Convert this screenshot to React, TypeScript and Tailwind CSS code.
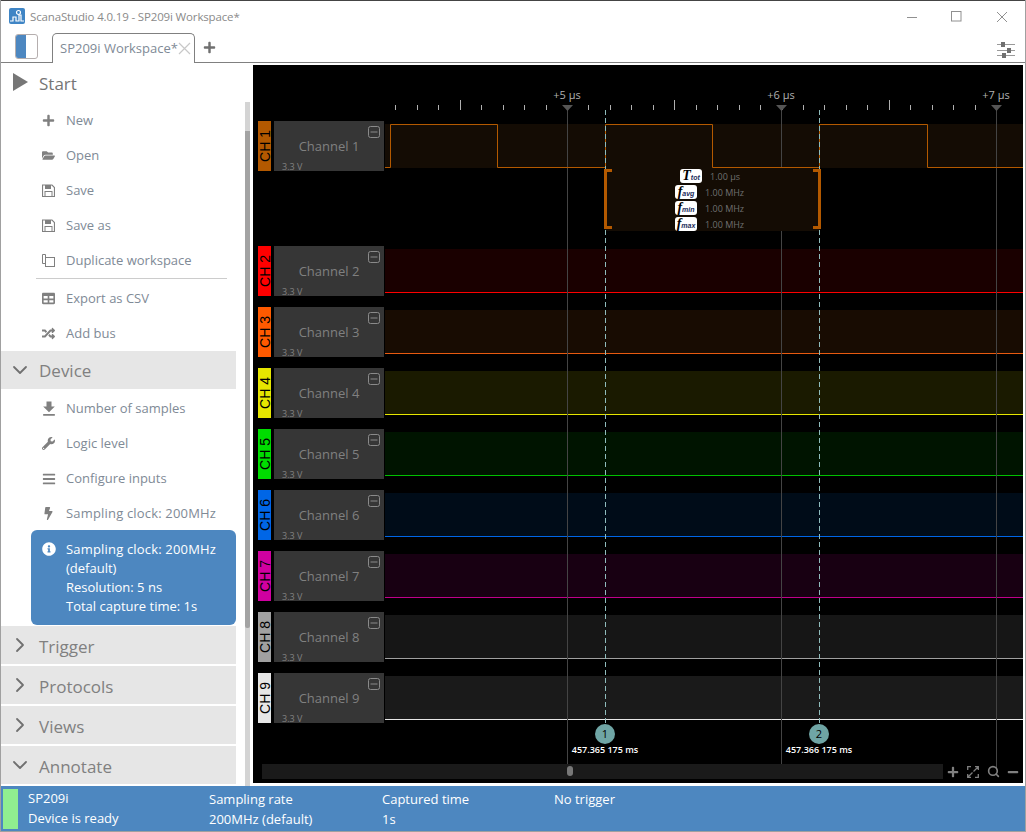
import React from "react";
import { ChevronDown, ChevronRight, Search } from "lucide-react";
import { FaPlus, FaFolderOpen, FaTable, FaRandom, FaWrench, FaBars, FaBolt, FaInfoCircle, FaMinus } from "react-icons/fa";
import { MdFileDownload } from "react-icons/md";

const FONT = "font-['Open_Sans','Noto_Sans',sans-serif]";

function SaveIcon() {
  return (
    <svg width="13" height="13" viewBox="0 0 13 13" fill="none">
      <path d="M1 1H10L12.5 3.5V12.5H0.5V1Z" stroke="#808080" strokeWidth="1.2" />
      <rect x="3" y="1" width="6" height="4" fill="#808080" />
      <rect x="3" y="7.5" width="7" height="5" stroke="#808080" />
    </svg>
  );
}

function CopyIcon() {
  return (
    <svg width="13" height="13" viewBox="0 0 13 13" fill="none">
      <path d="M3.5 3.5V0.5H0.5V9.5H3.5" stroke="#808080" />
      <rect x="3.5" y="3.5" width="9" height="9" stroke="#808080" />
    </svg>
  );
}

function Item({ icon, label, wide }: { icon: React.ReactNode; label: string; wide?: boolean }) {
  return (
    <div className="flex h-[35px] items-center">
      <div className="ml-[41px] flex w-[24px] items-center text-[#808080]">{icon}</div>
      <span className={`text-[13px] text-[#808a96] ${wide ? "tracking-[0.18px]" : ""}`}>{label}</span>
    </div>
  );
}

function Section({ label, open, mb, high }: { label: string; open?: boolean; mb?: boolean; high?: boolean }) {
  return (
    <div className={`flex h-[38px] w-[235px] shrink-0 items-center bg-[#e6e6e6] ${mb ? "mb-[2px]" : ""}`}>
      <div className="flex w-[38px] justify-center text-[#707070]">
        {open ? <ChevronDown size={24} strokeWidth={1.8} /> : <ChevronRight size={24} strokeWidth={1.8} />}
      </div>
      <span className={`text-[17px] leading-[24px] text-[#808080] ${high ? "pt-[2px]" : "pt-[4px]"}`}>{label}</span>
    </div>
  );
}

function Sidebar() {
  return (
    <div className="relative h-[723px] w-[251px] shrink-0 overflow-hidden">
      <div className="flex h-[40px] items-center">
        <svg width="15" height="18" viewBox="0 0 15 18" className="-mt-[2px] ml-[12px] mr-[11px]">
          <polygon points="0,0 15,9 0,18" fill="#777777" />
        </svg>
        <span className="pt-px text-[17px] text-[#757575]">Start</span>
      </div>
      <div className="w-[235px]">
        <Item icon={<FaPlus size={13} />} label="New" />
        <Item icon={<FaFolderOpen size={13} />} label="Open" />
        <Item icon={<SaveIcon />} label="Save" />
        <Item icon={<SaveIcon />} label="Save as" />
        <Item icon={<CopyIcon />} label="Duplicate workspace" />
        <div className="mb-[2px] ml-[35px] h-px w-[191px] bg-[#cccccc]" />
        <Item icon={<FaTable size={13} />} label="Export as CSV" />
        <Item icon={<FaRandom size={13} />} label="Add bus" />
        <Section label="Device" open mb high />
        <Item icon={<MdFileDownload size={20} className="-ml-[3px]" />} label="Number of samples" />
        <Item icon={<FaWrench size={13} />} label="Logic level" />
        <Item icon={<FaBars size={14} />} label="Configure inputs" />
        <Item icon={<FaBolt size={13} />} label="Sampling clock: 200MHz" wide />
        <div className="-mt-[1px] mb-px ml-[30px] flex h-[95px] w-[205px] rounded-[6px] bg-[#4d87c0] pt-[10px] text-[13px] leading-[19px] text-white">
          <div className="ml-[11px] w-[24px] pt-[2px]">
            <FaInfoCircle size={14} />
          </div>
          <div>
            <div className="tracking-[0.18px]">Sampling clock: 200MHz</div>
            <div>(default)</div>
            <div>Resolution: 5 ns</div>
            <div>Total capture time: 1s</div>
          </div>
        </div>
        <Section label="Trigger" mb />
        <Section label="Protocols" mb />
        <Section label="Views" mb />
        <Section label="Annotate" open />
      </div>
      <div className="absolute left-[244px] top-[39px] h-[684px] w-[5px] bg-[#d4d4d4]">
        <div className="mt-[29px] h-[497px] w-[5px] rounded-b-[2px] bg-[#a3a3a3]" />
      </div>
    </div>
  );
}

function Pill({ sym, sub, value, wide }: { sym: string; sub: string; value: string; wide?: boolean }) {
  return (
    <div className={`flex h-[16px] items-center ${wide ? "pl-[75px]" : "pl-[70px]"}`}>
      <div className="flex h-[14px] w-[22px] items-end justify-center rounded-[3px] bg-white text-black">
        <span className="font-['Liberation_Serif',serif] text-[14px] font-bold italic leading-[14px]">{sym}</span>
        <span className="font-['Liberation_Sans',sans-serif] text-[7px] font-bold italic leading-[10px] text-[#1a2a5a]">{sub}</span>
      </div>
      <span className="ml-[8px] mt-[2px] text-[9px] text-[#707070]">{value}</span>
    </div>
  );
}

const CHANNELS = [
  { n: 2, tag: "bg-[#ff0000]", band: "bg-[#1a0000]", line: "bg-[#ff0000]" },
  { n: 3, tag: "bg-[#ff5a00]", band: "bg-[#180c02]", line: "bg-[#e85a10]" },
  { n: 4, tag: "bg-[#e6e600]", band: "bg-[#1a1a00]", line: "bg-[#e6e600]" },
  { n: 5, tag: "bg-[#00dd00]", band: "bg-[#001400]", line: "bg-[#00c000]" },
  { n: 6, tag: "bg-[#0066e6]", band: "bg-[#000c18]", line: "bg-[#0066e6]" },
  { n: 7, tag: "bg-[#d000a0]", band: "bg-[#180012]", line: "bg-[#c0008a]" },
  { n: 8, tag: "bg-[#a0a0a0]", band: "bg-[#161616]", line: "bg-[#a0a0a0]" },
  { n: 9, tag: "bg-[#e6e6e6]", band: "bg-[#1a1a1a]", line: "bg-[#e6e6e6]" },
];

function ChannelHead({ n, tag }: { n: number; tag: string }) {
  return (
    <>
      <div className={`ml-[5px] flex h-[50px] w-[13px] shrink-0 items-center justify-center ${tag}`}>
        <span className="rotate-180 font-['Liberation_Sans',sans-serif] text-[14px] leading-none text-black [writing-mode:vertical-rl]">CH {n}</span>
      </div>
      <div className="relative ml-[3px] h-[50px] w-[110px] shrink-0 bg-[#363636]">
        <div className="pt-[15px] text-center text-[13px] leading-[20px] text-[#808080]">Channel {n}</div>
        <div className="absolute left-[8px] top-[41px] text-[9px] leading-[9px] text-[#808080]">3.3 V</div>
        <svg width="12" height="12" viewBox="0 0 12 12" className="absolute right-[4px] top-[5px]">
          <rect x="0.5" y="0.5" width="11" height="11" rx="2" fill="none" stroke="#8a8a8a" />
          <line x1="2.5" y1="6" x2="9.5" y2="6" stroke="#8a8a8a" />
        </svg>
      </div>
    </>
  );
}

function Canvas() {
  const ticks: number[] = [];
  for (let i = -8; i <= 20; i++) ticks.push(i);
  const toX = (k: number) => Math.round(314 + k * 21.45);
  return (
    <div className="relative ml-px mt-[2px] h-[718px] w-[770px] overflow-hidden bg-black">
      <div className="relative h-[56px]">
        <div className="absolute left-[274px] top-[23px] w-[80px] text-center text-[11px] leading-[14px] text-[#b0b0b0]">+5 µs</div>
        <div className="absolute left-[488px] top-[23px] w-[80px] text-center text-[11px] leading-[14px] text-[#b0b0b0]">+6 µs</div>
        <div className="absolute left-[703px] top-[23px] w-[80px] text-center text-[11px] leading-[14px] text-[#b0b0b0]">+7 µs</div>
      </div>
      <div className="flex h-[125px] items-start">
        <ChannelHead n={1} tag="bg-[#b35900]" />
        <div className="relative ml-px mt-[3px] h-[44px] flex-1 bg-[#140c04]" />
      </div>
      {CHANNELS.map((c) => (
        <div key={c.n} className="mb-[11px] flex h-[50px] items-start">
          <ChannelHead n={c.n} tag={c.tag} />
          <div className="ml-px mt-[3px] flex h-[44px] flex-1 flex-col justify-end">
            <div className={`flex-1 ${c.band}`} />
            <div className={`h-px ${c.line}`} />
          </div>
        </div>
      ))}
      <svg width="770" height="718" className="pointer-events-none absolute left-0 top-0">
        {ticks.map((k) => (
          <line key={k} x1={toX(k) + 0.5} x2={toX(k) + 0.5} y1={k === 5 || k === 15 || k === -5 ? 35 : 40} y2={45} stroke="#b0b0b0" />
        ))}
        {[314, 528, 743].map((x) => (
          <g key={x}>
            <line x1={x + 0.5} x2={x + 0.5} y1={45} y2={705} stroke="#444444" />
            <polygon points={`${x - 5},40 ${x + 6},40 ${x + 0.5},46`} fill="#555555" />
          </g>
        ))}
        <polyline
          points="132,102.5 137.5,102.5 137.5,59.5 244.5,59.5 244.5,102.5 352.5,102.5 352.5,59.5 459.5,59.5 459.5,102.5 566.5,102.5 566.5,59.5 674.5,59.5 674.5,102.5 770,102.5"
          fill="none"
          stroke="#b35900"
        />
      </svg>
      <div className="absolute left-[352px] top-[103px] h-[63px] w-[215px] bg-[#140c04]">
        <Pill sym="T" sub="tot" value="1.00 µs" wide />
        <Pill sym="f" sub="avg" value="1.00 MHz" />
        <Pill sym="f" sub="min" value="1.00 MHz" />
        <Pill sym="f" sub="max" value="1.00 MHz" />
      </div>
      <svg width="770" height="718" className="pointer-events-none absolute left-0 top-0">
        {[352.5, 566.5].map((x) => (
          <line key={x} x1={x} x2={x} y1={45} y2={660} stroke="#8fbcbc" strokeDasharray="5 3" />
        ))}
        <path d="M359,105.5 H352.5 V162.5 H359 M560,105.5 H566.5 V162.5 H560" fill="none" stroke="#b35900" strokeWidth="3" />
      </svg>
      <div className="absolute left-[342px] top-[659px] flex h-[20px] w-[20px] items-center justify-center rounded-full bg-[#6fa5a5] text-[11px] text-black">1</div>
      <div className="absolute left-[556px] top-[659px] flex h-[20px] w-[20px] items-center justify-center rounded-full bg-[#6fa5a5] text-[11px] text-black">2</div>
      <div className="absolute left-[302px] top-[678px] w-[100px] text-center text-[9px] font-semibold leading-[14px] text-white">457.365 175 ms</div>
      <div className="absolute left-[516px] top-[678px] w-[100px] text-center text-[9px] font-semibold leading-[14px] text-white">457.366 175 ms</div>
      <div className="absolute bottom-[4px] left-[9px] right-0 flex h-[15px] items-center">
        <div className="relative h-[15px] w-[681px] bg-[#1a1a1a]">
          <div className="absolute left-[305px] top-[2px] h-[10px] w-[6px] rounded-full bg-[#777777]" />
        </div>
        <div className="flex items-center text-[#808080]">
          <div className="flex w-[20px] justify-center"><FaPlus size={12} /></div>
          <div className="flex w-[20px] justify-center">
            <svg width="12" height="12" viewBox="0 0 12 12" fill="none" stroke="#808080" strokeWidth="1.3">
              <path d="M0.7 4V0.7H4M11.3 8V11.3H8" />
              <path d="M6.5 5.5L11 1M8 0.7H11.3V4M5.5 6.5L1 11M4 11.3H0.7V8" />
            </svg>
          </div>
          <div className="flex w-[20px] justify-center"><Search size={13} strokeWidth={3} /></div>
          <div className="flex w-[20px] justify-center"><FaMinus size={12} /></div>
        </div>
      </div>
    </div>
  );
}

export default function App() {
  return (
    <div className={`${FONT} flex h-[832px] w-[1026px] flex-col overflow-hidden border-x border-b border-[#a0a0a0] bg-white`}>
      <div className="h-px bg-[#444444]" />
      <div className="flex h-[31px] items-center">
        <svg width="16" height="16" viewBox="0 0 16 16" className="-mt-[1px] ml-[8px] mr-[5px]">
          <rect width="16" height="16" rx="2" fill="#3f85c5" />
          <path d="M1 13h3V9h3v4h3V7h2v6h3" fill="none" stroke="#fff" strokeWidth="1.2" />
          <circle cx="9.5" cy="4.5" r="2" fill="none" stroke="#fff" strokeWidth="1.2" />
        </svg>
        <span className="text-[11.5px] tracking-[-0.15px] text-[#8a8a8a]">ScanaStudio 4.0.19 - SP209i Workspace*</span>
        <div className="ml-auto flex items-center">
          <svg width="12" height="12" viewBox="0 0 12 12" className="mr-[32px]"><line x1="0" y1="6.5" x2="10" y2="6.5" stroke="#909090" /></svg>
          <svg width="11" height="11" viewBox="0 0 11 11" className="mr-[34px]"><rect x="0.5" y="0.5" width="9.5" height="9.5" fill="none" stroke="#909090" /></svg>
          <svg width="12" height="12" viewBox="0 0 12 12" className="mr-[17px]"><path d="M1 1l10 10M11 1L1 11" stroke="#909090" fill="none" /></svg>
        </div>
      </div>
      <div className="relative flex h-[31px] items-end border-b border-[#808080]">
        <div className="mb-[3px] ml-[14px] flex h-[25px] w-[23px] overflow-hidden rounded-[3px] border border-[#b5aeae]">
          <div className="w-[10px] bg-[#4d87c0]" />
        </div>
        <div className="relative -mb-px ml-[14px] flex h-[30px] w-[143px] items-center rounded-t-[5px] border border-b-0 border-[#808080] bg-white pl-[7px]">
          <span className="text-[13px] text-[#808a96]">SP209i Workspace*</span>
          <svg width="13" height="13" viewBox="0 0 13 13" className="absolute right-[3px] top-[8px]">
            <path d="M1 1l11 11M12 1L1 12" stroke="#c8c8c8" strokeWidth="1.2" fill="none" />
          </svg>
        </div>
        <div className="mb-[8px] ml-[8px] text-[#707070]"><FaPlus size={13} /></div>
        <svg width="18" height="16" viewBox="0 0 18 16" className="mb-[4px] ml-auto mr-[10px]">
          <path d="M0 2.5h18M0 8.5h18M0 13.5h18" stroke="#9a9a9a" />
          <rect x="4" y="0" width="4" height="5" fill="#707070" />
          <rect x="10" y="6" width="4" height="5" fill="#707070" />
          <rect x="5" y="11" width="4" height="5" fill="#707070" />
        </svg>
      </div>
      <div className="flex h-[723px]">
        <Sidebar />
        <Canvas />
      </div>
      <div className="flex h-[45px] items-stretch bg-[#4d87c0] text-[13px] leading-[19.5px] text-white">
        <div className="mb-[2px] ml-[2px] mr-[10px] mt-[3px] w-[15px] bg-[#90ee90]" />
        <div className="w-[181px] pt-[3px]"><div>SP209i</div><div>Device is ready</div></div>
        <div className="w-[173px] pt-[4px]"><div>Sampling rate</div><div>200MHz (default)</div></div>
        <div className="w-[172px] pt-[4px]"><div>Captured time</div><div>1s</div></div>
        <div className="pt-[4px]">No trigger</div>
      </div>
    </div>
  );
}
